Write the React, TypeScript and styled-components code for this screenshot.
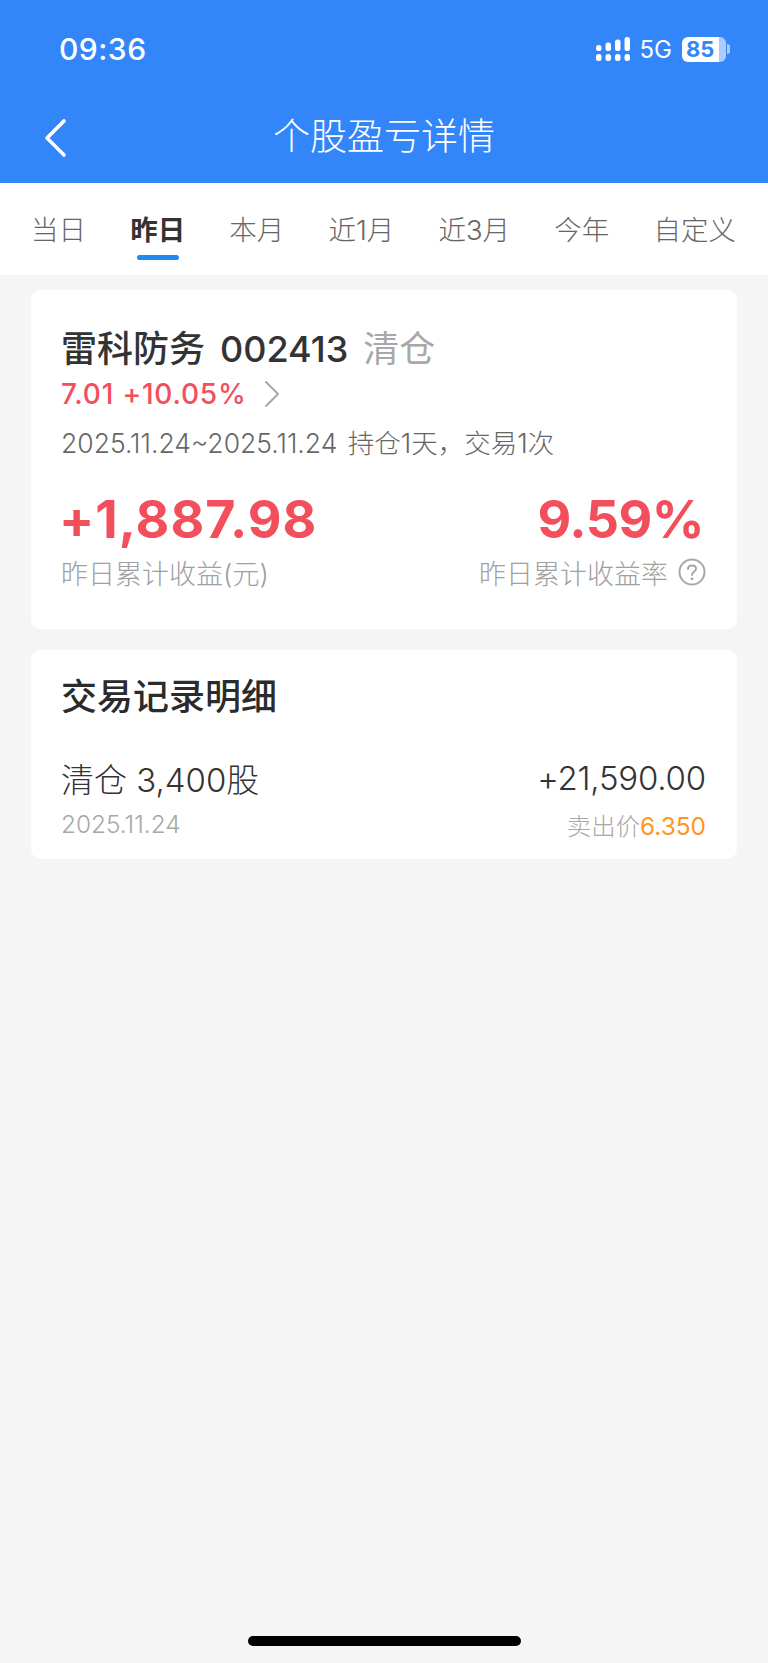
import React from "react";
import styled, { createGlobalStyle } from "styled-components";

const tabs = ["当日", "昨日", "本月", "近1月", "近3月", "今年", "自定义"];

const GlobalStyle = createGlobalStyle`
  html, body {
    margin: 0;
    padding: 0;
    background: #f5f5f5;
    font-family: Inter, "Noto Sans CJK SC", sans-serif;
  }
`;

const Page = styled.div`
  position: relative;
  width: 768px;
  height: 1663px;
  overflow: hidden;
  background: #f5f5f5;
`;

const Header = styled.div`
  height: 183px;
  background: #3286f9;
  color: #fff;
  display: flex;
  flex-direction: column;
`;

const StatusBar = styled.div`
  height: 98px;
  display: flex;
  align-items: center;
  justify-content: space-between;
  padding: 0 38px 0 59px;
`;

const Time = styled.div`
  font-size: 30px;
  font-weight: 500;
  letter-spacing: 0.5px;
`;

const StatusRight = styled.div`
  display: flex;
  align-items: center;
  gap: 10px;
`;

const NetLabel = styled.div`
  font-size: 24px;
  font-weight: 400;
`;

const Battery = styled.div`
  width: 44px;
  height: 25px;
  border-radius: 6px;
  background: linear-gradient(90deg, #fff 85%, #a9ccfc 85%);
  color: #3286f9;
  font-size: 22px;
  font-weight: 700;
  line-height: 25px;
  padding-left: 4px;
  box-sizing: border-box;
`;

const BatteryCap = styled.div`
  width: 3px;
  height: 10px;
  margin-left: -9px;
  border-radius: 0 3px 3px 0;
  background: #a9ccfc;
`;

const NavBar = styled.div`
  position: relative;
  flex: 1;
  display: flex;
  align-items: center;
  justify-content: center;
  padding-bottom: 8px;
`;

const BackButton = styled.div`
  position: absolute;
  left: 42px;
  top: 20px;
  display: flex;
`;

const Title = styled.div`
  font-size: 37px;
  font-weight: 300;
  line-height: 50px;
`;

const TabBar = styled.div`
  height: 92px;
  background: #fff;
  display: flex;
  justify-content: space-between;
  padding: 0 32px 0 31px;
`;

const Tab = styled.div<{ $active?: boolean }>`
  position: relative;
  height: 92px;
  line-height: 94px;
  font-size: 27.5px;
  font-weight: ${(p) => (p.$active ? 700 : 300)};
  color: ${(p) => (p.$active ? "#333" : "#666")};
  &::after {
    content: "";
    display: ${(p) => (p.$active ? "block" : "none")};
    position: absolute;
    left: 7px;
    right: 6px;
    bottom: 15px;
    height: 5px;
    border-radius: 3px;
    background: #1e8bf5;
  }
`;

const Content = styled.div`
  padding: 15px 31px 0;
  display: flex;
  flex-direction: column;
  gap: 21px;
`;

const Card = styled.div`
  background: #fff;
  border-radius: 10px;
  padding: 0 31px 0 30px;
`;

const SummaryCard = styled(Card)`
  height: 339px;
  box-sizing: border-box;
  padding-top: 34px;
`;

const NameRow = styled.div`
  display: flex;
  align-items: center;
  height: 50px;
  font-size: 36px;
  line-height: 50px;
`;

const StockName = styled.span`
  font-weight: 500;
  color: #333;
`;

const StockCode = styled.span`
  margin-left: 15px;
  font-weight: 500;
  color: #333;
`;

const Tag = styled.span`
  margin-left: 15px;
  font-weight: 400;
  color: #a8a8a8;
`;

const PriceRow = styled.div`
  display: flex;
  align-items: center;
  gap: 16px;
  height: 38px;
  margin-top: 1px;
  font-size: 28px;
  font-weight: 500;
  color: #f34e5c;
  letter-spacing: 0.8px;
`;

const HoldInfo = styled.div`
  margin-top: 11px;
  font-size: 26.5px;
  line-height: 38px;
  font-weight: 300;
  color: #666;
  white-space: nowrap;
  word-spacing: 3px;
`;

const StatRow = styled.div`
  display: flex;
  justify-content: space-between;
  margin-top: 28px;
`;

const Stat = styled.div<{ $right?: boolean }>`
  display: flex;
  flex-direction: column;
  align-items: ${(p) => (p.$right ? "flex-end" : "flex-start")};
`;

const BigNumber = styled.div<{ $right?: boolean }>`
  font-size: 52px;
  line-height: 60px;
  font-weight: 700;
  color: #f34e5c;
  letter-spacing: ${(p) => (p.$right ? "-0.5px" : "1px")};
  margin-left: -2px;
  margin-right: ${(p) => (p.$right ? "2px" : "0")};
`;

const StatLabel = styled.div`
  display: flex;
  align-items: center;
  gap: 10px;
  height: 40px;
  margin-top: 2px;
  font-size: 27px;
  font-weight: 300;
  color: #a0a0a0;
`;

const DetailCard = styled(Card)`
  height: 209px;
  box-sizing: border-box;
  padding-top: 22px;
`;

const SectionTitle = styled.div`
  font-size: 36px;
  line-height: 50px;
  font-weight: 500;
  color: #2b2b2b;
`;

const TradeRow = styled.div`
  display: flex;
  justify-content: space-between;
  align-items: center;
  margin-top: 34px;
  height: 44px;
`;

const TradeMain = styled.div`
  font-size: 33px;
  font-weight: 300;
  color: #333;
  white-space: nowrap;
`;

const TradeAmount = styled.div`
  font-size: 33px;
  font-weight: 300;
  color: #333;
  letter-spacing: -0.2px;
`;

const TradeSub = styled.div`
  display: flex;
  justify-content: space-between;
  align-items: center;
  margin-top: 7px;
  height: 34px;
  font-size: 24.4px;
  font-weight: 300;
  color: #a8a8a8;
`;

const PriceValue = styled.span`
  color: #ff9522;
  font-weight: 400;
`;

const HomeBar = styled.div`
  position: absolute;
  left: 248px;
  bottom: 17px;
  width: 273px;
  height: 10px;
  border-radius: 5px;
  background: #000;
`;

const SignalIcon = () => (
  <svg width="34" height="25" viewBox="0 0 34 25" fill="#fff">
    <rect x="0" y="8" width="5.5" height="6" rx="2.5" />
    <rect x="9.5" y="5.5" width="5.5" height="8.5" rx="2.5" />
    <rect x="19" y="2.5" width="5.5" height="11.5" rx="2.5" />
    <rect x="28.5" y="0" width="5.5" height="14" rx="2.5" />
    <rect x="0" y="17" width="5.5" height="7" rx="2.5" />
    <rect x="9.5" y="17" width="5.5" height="7" rx="2.5" />
    <rect x="19" y="17" width="5.5" height="7" rx="2.5" />
    <rect x="28.5" y="17" width="5.5" height="7" rx="2.5" />
  </svg>
);

const BackIcon = () => (
  <svg width="26" height="40" viewBox="0 0 26 40" fill="none">
    <path d="M22 3 L5 20 L22 37" stroke="#fff" strokeWidth="3.6" strokeLinecap="round" strokeLinejoin="round" />
  </svg>
);

const ChevronIcon = () => (
  <svg width="18" height="28" viewBox="0 0 18 28" fill="none">
    <path d="M3 2 L15 14 L3 26" stroke="#a8a8a8" strokeWidth="2" strokeLinecap="round" strokeLinejoin="round" />
  </svg>
);

const HelpIcon = () => (
  <svg width="28" height="28" viewBox="0 0 28 28" fill="none">
    <circle cx="14" cy="14" r="12.5" stroke="#a8a8a8" strokeWidth="2" />
    <path d="M10 11 C10 8.6 11.8 7.4 14 7.4 C16.3 7.4 18 8.8 18 10.8 C18 13.6 14 13.8 14 17" stroke="#a8a8a8" strokeWidth="2" strokeLinecap="round" />
    <circle cx="14" cy="20.8" r="1.4" fill="#a8a8a8" />
  </svg>
);

export default function App() {
  return (
    <Page>
      <GlobalStyle />
      <Header>
        <StatusBar>
          <Time>09:36</Time>
          <StatusRight>
            <SignalIcon />
            <NetLabel>5G</NetLabel>
            <Battery>85</Battery>
            <BatteryCap />
          </StatusRight>
        </StatusBar>
        <NavBar>
          <BackButton>
            <BackIcon />
          </BackButton>
          <Title>个股盈亏详情</Title>
        </NavBar>
      </Header>

      <TabBar>
        {tabs.map((t) => (
          <Tab key={t} $active={t === "昨日"}>
            {t}
          </Tab>
        ))}
      </TabBar>

      <Content>
        <SummaryCard>
          <NameRow>
            <StockName>雷科防务</StockName>
            <StockCode>002413</StockCode>
            <Tag>清仓</Tag>
          </NameRow>
          <PriceRow>
            7.01 +10.05%
            <ChevronIcon />
          </PriceRow>
          <HoldInfo>2025.11.24~2025.11.24 持仓1天，交易1次</HoldInfo>
          <StatRow>
            <Stat>
              <BigNumber>+1,887.98</BigNumber>
              <StatLabel>昨日累计收益(元)</StatLabel>
            </Stat>
            <Stat $right>
              <BigNumber $right>9.59%</BigNumber>
              <StatLabel>
                昨日累计收益率
                <HelpIcon />
              </StatLabel>
            </Stat>
          </StatRow>
        </SummaryCard>

        <DetailCard>
          <SectionTitle>交易记录明细</SectionTitle>
          <TradeRow>
            <TradeMain>清仓 3,400股</TradeMain>
            <TradeAmount>+21,590.00</TradeAmount>
          </TradeRow>
          <TradeSub>
            <span>2025.11.24</span>
            <span>
              卖出价<PriceValue>6.350</PriceValue>
            </span>
          </TradeSub>
        </DetailCard>
      </Content>

      <HomeBar />
    </Page>
  );
}
